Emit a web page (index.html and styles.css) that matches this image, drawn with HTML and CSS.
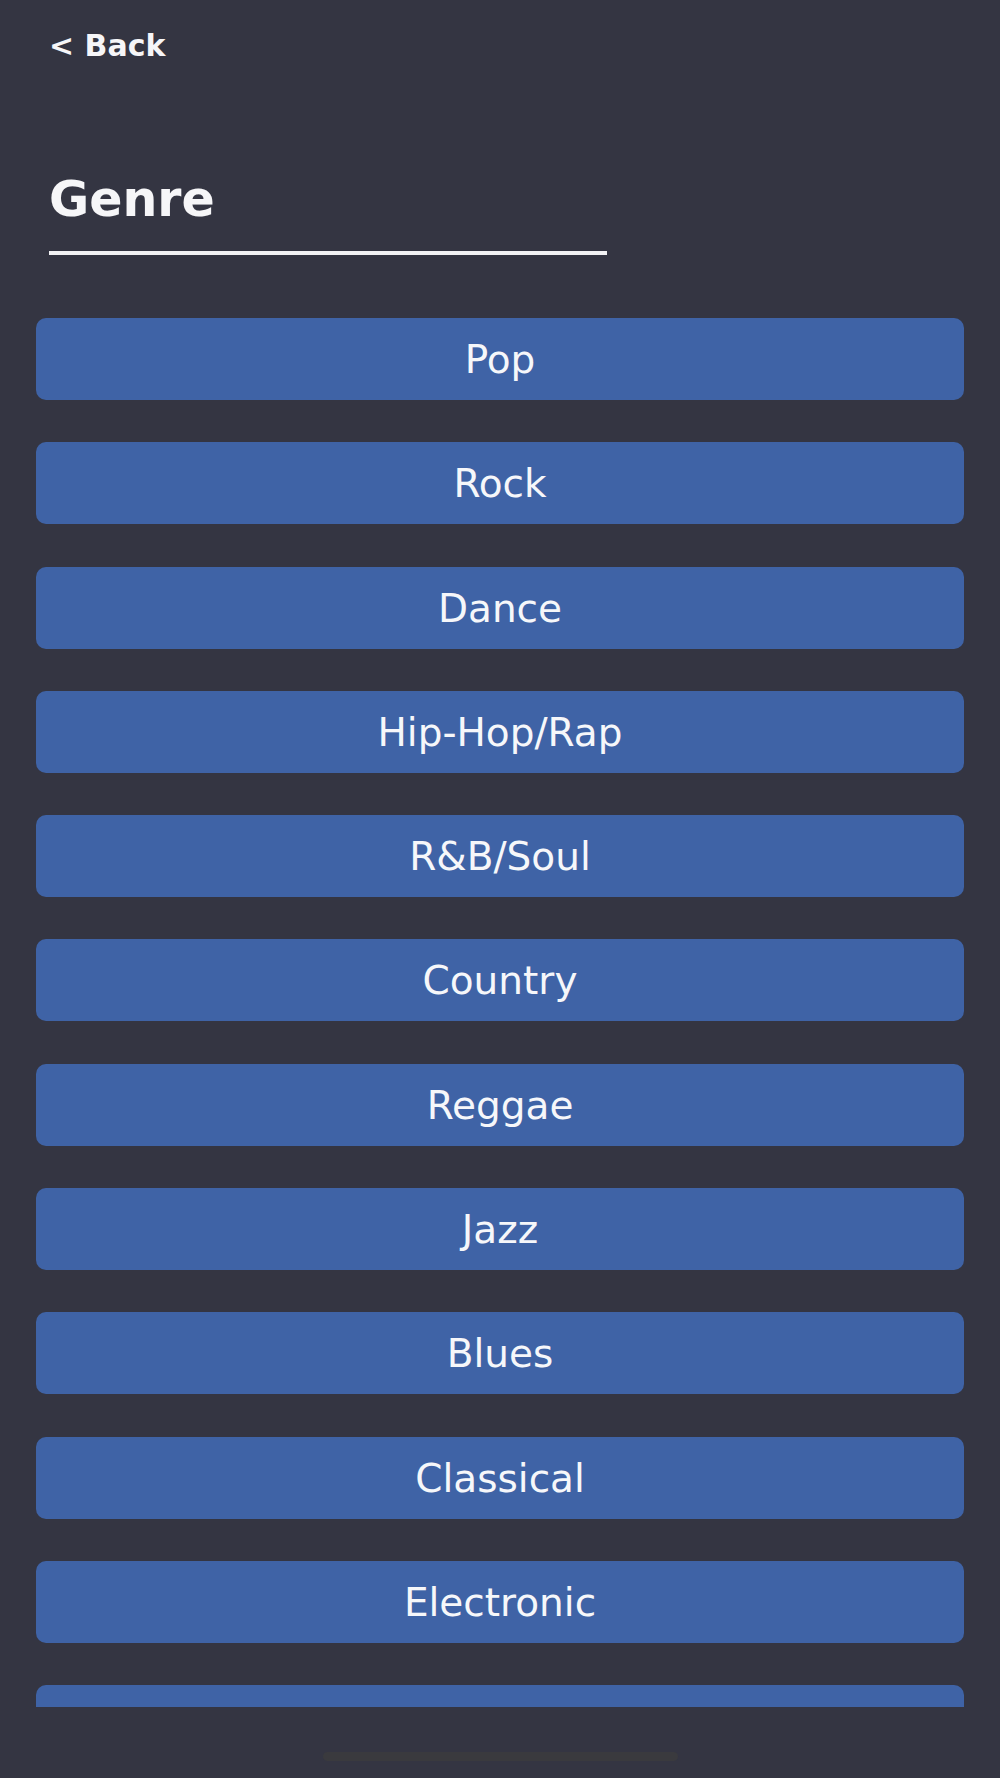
FILE: index.html
```html
<!DOCTYPE html>
<html lang="en">
<head>
  <meta charset="UTF-8" />
  <meta name="viewport" content="width=device-width, initial-scale=1.0"/>
  <title>Genre</title>
  <link rel="stylesheet" href="styles.css">
</head>
<body>
  <div class="screen">
    <header class="top">
      <a class="back" href="#">&lt; Back</a>
      <h1>Genre</h1>
      <div class="rule"></div>
    </header>

    <main class="genre-list">
      <button class="genre">Pop</button>
      <button class="genre">Rock</button>
      <button class="genre">Dance</button>
      <button class="genre">Hip-Hop/Rap</button>
      <button class="genre">R&amp;B/Soul</button>
      <button class="genre">Country</button>
      <button class="genre">Reggae</button>
      <button class="genre">Jazz</button>
      <button class="genre">Blues</button>
      <button class="genre">Classical</button>
      <button class="genre">Electronic</button>
      <!-- next row is scrolled below the fold -->
      <button class="genre" aria-hidden="true"></button>
    </main>

    <div class="home-bar"></div>
  </div>
</body>
</html>
```

FILE: styles.css
```css
*{margin:0;padding:0;box-sizing:border-box}
html,body{background:#343542}
body{font-family:'DejaVu Sans','Liberation Sans',sans-serif;color:#f4f4f6;width:1000px;height:1778px;overflow:hidden}
.screen{display:flex;flex-direction:column;height:1778px}
.top{padding:28px 0 0 49px}
.back{display:block;color:#f6f6f8;text-decoration:none;font-weight:bold;font-size:30px;line-height:36px}
.top h1{margin-top:108px;font-size:49px;line-height:56px;font-weight:bold;color:#f6f6f8}
.rule{margin-top:23px;width:558px;height:4px;background:#f2f2f4}
.genre-list{margin:63px 36px 0;height:1389px;overflow:hidden;display:flex;flex-direction:column;gap:42.3px}
.genre{flex:0 0 82px;width:100%;display:flex;align-items:center;justify-content:center;padding-top:1px;background:#3f63a6;border:none;border-radius:10px;color:#f6f7fa;font-family:'DejaVu Sans','Liberation Sans',sans-serif;font-size:39px;cursor:pointer}
.home-bar{margin:45px auto 0;width:355px;height:9px;border-radius:5px;background:#3a3a3e}
```
